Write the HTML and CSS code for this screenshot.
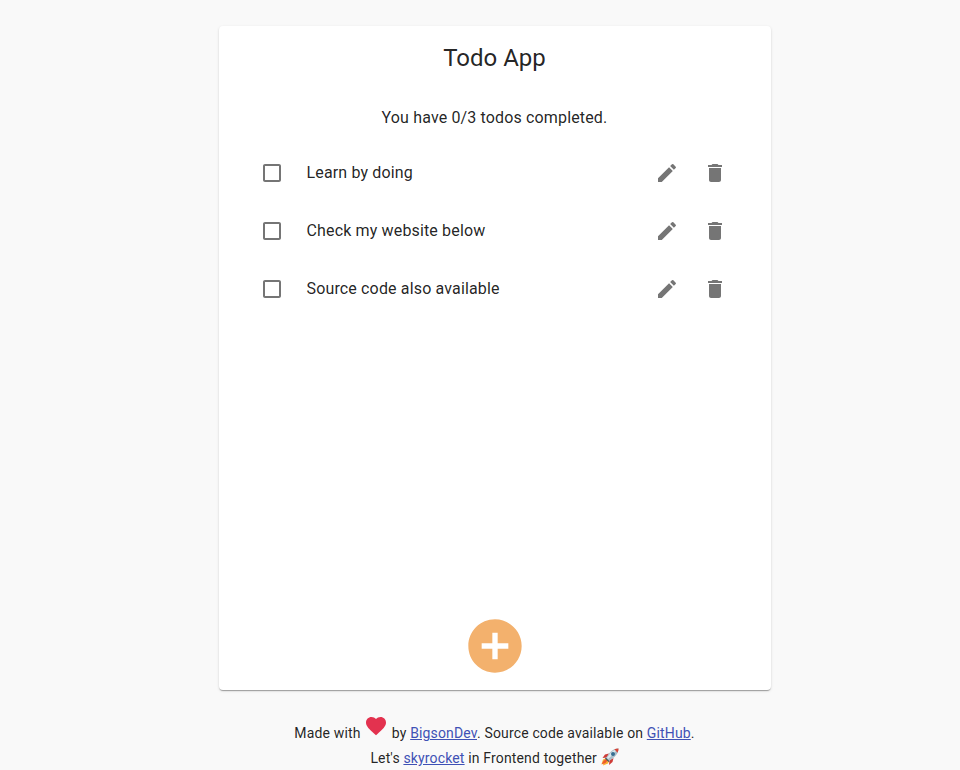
FILE: index.html
```html
<!DOCTYPE html>
<html lang="en">
<head>
<meta charset="utf-8">
<title>Todo App</title>
<link rel="stylesheet" href="styles.css">
</head>
<body>
<svg class="defs" width="0" height="0">
  <symbol id="box" viewBox="0 0 24 24"><path d="M19 5v14H5V5h14m0-2H5c-1.1 0-2 .9-2 2v14c0 1.1.9 2 2 2h14c1.1 0 2-.9 2-2V5c0-1.1-.9-2-2-2z"/></symbol>
  <symbol id="edit" viewBox="0 0 24 24"><path d="M3 17.25V21h3.75L17.81 9.94l-3.75-3.75L3 17.25zM20.71 7.04c.39-.39.39-1.02 0-1.41l-2.34-2.34a.9959.9959 0 0 0-1.41 0l-1.83 1.83 3.75 3.75 1.83-1.83z"/></symbol>
  <symbol id="delete" viewBox="0 0 24 24"><path d="M6 19c0 1.1.9 2 2 2h8c1.1 0 2-.9 2-2V7H6v12zM19 4h-3.5l-1-1h-5l-1 1H5v2h14V4z"/></symbol>
</svg>
<main class="card">
  <h1 class="title">Todo App</h1>
  <p class="summary">You have 0/3 todos completed.</p>
  <ul class="list">
    <li class="item">
      <svg class="icon"><use href="#box"/></svg>
      <span class="label">Learn by doing</span>
      <svg class="icon"><use href="#edit"/></svg>
      <svg class="icon"><use href="#delete"/></svg>
    </li>
    <li class="item">
      <svg class="icon"><use href="#box"/></svg>
      <span class="label">Check my website below</span>
      <svg class="icon"><use href="#edit"/></svg>
      <svg class="icon"><use href="#delete"/></svg>
    </li>
    <li class="item">
      <svg class="icon"><use href="#box"/></svg>
      <span class="label">Source code also available</span>
      <svg class="icon"><use href="#edit"/></svg>
      <svg class="icon"><use href="#delete"/></svg>
    </li>
  </ul>
  <svg class="add" viewBox="0 0 24 24"><path d="M12 2C6.48 2 2 6.48 2 12s4.48 10 10 10 10-4.48 10-10S17.520 2 12 2zm5 11h-4v4h-2v-4H7v-2h4V7h2v4h4v2z"/></svg>
</main>
<footer class="footer">
  <p class="line">Made with <svg class="heart" viewBox="0 0 24 24"><path d="M12 21.35l-1.45-1.32C5.400 15.360 2 12.280 2 8.500 2 5.420 4.420 3 7.500 3c1.740 0 3.410.81 4.500 2.090C13.090 3.810 14.760 3 16.500 3 19.580 3 22 5.420 22 8.500c0 3.780-3.400 6.860-8.550 11.540L12 21.350z"/></svg> by <a href="#">BigsonDev</a>. Source code available on <a href="#">GitHub</a>.</p>
  <p class="line">Let's <a href="#">skyrocket</a> in Frontend together <svg class="rocket" viewBox="0 0 18 18">
    <path d="M5.500 10L2 11.500 0.500 16l2-1-.5 2.500 5-2 1.500-3z" fill="#f9b233"/>
    <path d="M5 11l-2.500 2L.5 16.500l4-1.500 2-2.500z" fill="#ee5a2b"/>
    <path d="M8 5.500L4 6.500 1.500 10 6 9.500z" fill="#cf3b36"/>
    <path d="M12.500 10L11.500 14 8 17l.5-5z" fill="#cf3b36"/>
    <path d="M17.500.5C13 .5 9.500 2.500 5 10l3 3C14.500 9 17.500 5 17.500.5z" fill="#a9bfca"/>
    <path d="M16 1.500C12 2 9 5 6 10l1 1c3.500-3 7-6.500 9-9.500z" fill="#dce8ec"/>
    <path d="M17.500.5c-1.500 0-3 .2-4.200.8l3.300 3.400c.7-1.400.9-2.800.9-4.200z" fill="#d84335"/>
    <circle cx="12" cy="6" r="2" fill="#376e91"/>
    <path d="M4.800 9.500l3.700 3.700-1 .8-3.500-3.500z" fill="#455764"/>
  </svg></p>
</footer>
</body>
</html>
```
FILE: styles.css
```css
* { box-sizing: border-box; }
body {
  margin: 0;
  padding: 26px 0 0 30px;
  height: 770px;
  overflow: hidden;
  background: #f9f9f9;
  color: rgba(0, 0, 0, 0.87);
  font-family: Roboto, "Liberation Sans", sans-serif;
}
.defs { position: absolute; }
.card {
  display: flex;
  flex-direction: column;
  align-items: center;
  width: 552px;
  height: 664px;
  margin: 0 auto;
  padding: 16px 24px 12px;
  background: #fff;
  border-radius: 4px;
  box-shadow: 0 2px 1px -1px rgba(0,0,0,.2), 0 1px 1px 0 rgba(0,0,0,.14), 0 1px 3px 0 rgba(0,0,0,.12);
}
.title {
  margin: 0;
  padding-right: 1px;
  font-size: 24px;
  font-weight: 400;
  line-height: 32px;
  letter-spacing: 0;
}
.summary {
  margin: 32px 0 0;
  padding-right: 1px;
  font-size: 16px;
  line-height: 24px;
  letter-spacing: 0.00938em;
}
.list {
  width: 100%;
  margin: 14px 0 0;
  padding: 0 16px;
  list-style: none;
}
.item {
  display: flex;
  align-items: center;
  height: 58px;
  gap: 24px;
}
.icon {
  flex: none;
  width: 24px;
  height: 24px;
  fill: #757575;
}
.item .icon:last-child { margin-right: 4px; }
.item .icon:first-child { margin-left: 1px; }
.label {
  flex: 1;
  margin-left: -1.5px;
  font-size: 16px;
  line-height: 24px;
  letter-spacing: 0.00938em;
}
.add {
  width: 64px;
  height: 64px;
  margin-top: auto;
  fill: #f3b16d;
}
.footer {
  width: 552px;
  margin: 24px auto 0;
  padding-right: 1px;
  text-align: center;
  font-size: 14px;
  letter-spacing: 0.01071em;
}
.line {
  margin: 0;
  height: 34px;
  line-height: 20px;
  white-space: nowrap;
}
.footer a { color: #3f51b5; }
.heart {
  width: 24px;
  height: 24px;
  fill: #e3324f;
}
.rocket {
  width: 18px;
  height: 18px;
  vertical-align: -3px;
}
```
